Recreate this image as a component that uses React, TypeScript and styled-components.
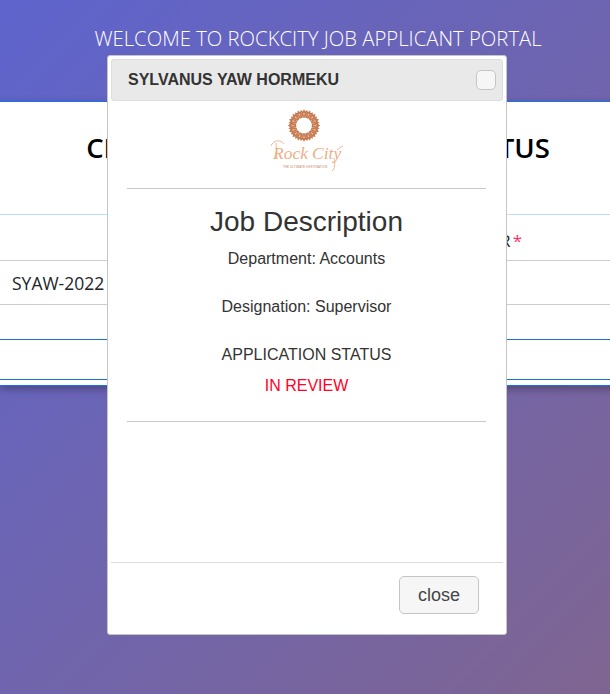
import React from "react";
import styled, { createGlobalStyle } from "styled-components";

const GlobalStyle = createGlobalStyle`
  html, body {
    margin: 0;
    padding: 0;
    height: 100%;
  }
  body {
    font-family: "Open Sans", sans-serif;
    overflow: hidden;
  }
`;

const Logo: React.FC = () => {
  const rays = Array.from({ length: 16 }, (_, i) => (i * 360) / 16);
  return (
    <svg width="74" height="66" viewBox="0 0 74 66" role="img" aria-label="Rock City">
      <g transform="translate(34 19.5)">
        {rays.map(angle => (
          <g key={angle} transform={`rotate(${angle})`}>
            <path d="M-1.4 -7.8 L1.4 -7.8 L3.4 -15.4 L1.4 -14 L0 -16.2 L-1.4 -14 L-3.4 -15.4 Z" fill="#c67b52" />
            <path d="M0 -9 L0.8 -12.4 L-0.8 -12.4 Z" fill="#ecc6ae" />
          </g>
        ))}
      </g>
      <path
        d="M1 40 C3 34 11 33 14 38 M6 37 L7 53 M67 44 C69 42 71 41 73 40"
        fill="none"
        stroke="#f0ae88"
        strokeWidth="0.9"
      />
      <path d="M64 52 C65 58 65 63 62 65" fill="none" stroke="#f0ae88" strokeWidth="0.9" />
      <text x="3" y="53" fontFamily="Liberation Serif, serif" fontStyle="italic" fontSize="17.5" fill="#f0ae88">
        Rock
      </text>
      <text x="42" y="53" fontFamily="Liberation Serif, serif" fontStyle="italic" fontSize="17.5" fill="#f0ae88">
        City
      </text>
      <text x="35" y="61.5" textAnchor="middle" fontFamily="Liberation Sans, sans-serif" fontSize="3.2" fill="#c98f70">
        THE ULTIMATE DESTINATION
      </text>
    </svg>
  );
};

const App: React.FC = () => (
  <>
    <GlobalStyle />
    <Page>
      <Banner>WELCOME TO ROCKCITY JOB APPLICANT PORTAL</Banner>
      <Card>
        <CardTitle>CHECK YOUR APPLICATION STATUS</CardTitle>
        <Table>
          <HeadRow>
            APPLICATION NUMBER<Required>*</Required>
          </HeadRow>
          <BodyRow>SYAW-2022</BodyRow>
          <SpacerRow />
          <ActionRow />
        </Table>
      </Card>

      <Dialog>
        <TitleBar>
          <DialogName>SYLVANUS YAW HORMEKU</DialogName>
          <IconButton aria-label="close" />
        </TitleBar>
        <DialogContent>
          <LogoWrap>
            <Logo />
          </LogoWrap>
          <Rule />
          <JobHeading>Job Description</JobHeading>
          <Line>Department: Accounts</Line>
          <Line>Designation: Supervisor</Line>
          <Line>APPLICATION STATUS</Line>
          <Status>IN REVIEW</Status>
          <BottomRule />
        </DialogContent>
        <ButtonPane>
          <CloseButton>close</CloseButton>
        </ButtonPane>
      </Dialog>
    </Page>
  </>
);

const Page = styled.div`
  position: relative;
  height: 694px;
  overflow: hidden;
  background: linear-gradient(135deg, #5e64cd 0%, #7f6591 100%);
`;

const Banner = styled.div`
  width: 636px;
  height: 101px;
  padding-top: 25px;
  box-sizing: border-box;
  text-align: center;
  font-size: 20.3px;
  line-height: 26px;
  font-weight: 300;
  color: #fff;
  white-space: nowrap;
`;

const Card = styled.div`
  width: 636px;
  height: 285px;
  box-sizing: border-box;
  background: #fff;
  border-top: 1px solid #1a73e8;
  border-bottom: 1px solid #1a73e8;
  box-shadow: 0 3px 8px rgba(0, 0, 0, 0.3);
`;

const CardTitle = styled.h2`
  margin: 0;
  height: 112px;
  padding-top: 28px;
  box-sizing: border-box;
  text-align: center;
  font-size: 27.5px;
  line-height: 36px;
  font-weight: 600;
  color: #000;
  white-space: nowrap;
`;

const Table = styled.div`
  display: flex;
  flex-direction: column;
`;

const HeadRow = styled.div`
  height: 46px;
  box-sizing: border-box;
  padding: 14px 114px 0 0;
  text-align: right;
  border-top: 1px solid #b9dcf8;
  font-size: 17px;
  line-height: 24px;
  color: #212529;
`;

const Required = styled.span`
  margin-left: 2px;
  color: #ff3366;
`;

const BodyRow = styled.div`
  display: flex;
  align-items: center;
  height: 44px;
  padding-left: 12px;
  border-top: 1px solid #ccc;
  box-sizing: border-box;
  font-size: 17.5px;
  color: #212529;
`;

const SpacerRow = styled.div`
  height: 35px;
  border-top: 1px solid #ccc;
  box-sizing: border-box;
`;

const ActionRow = styled.div`
  height: 41px;
  border-top: 1px solid #1a6fd0;
  border-bottom: 1px solid #1a6fd0;
  box-sizing: border-box;
`;

const Dialog = styled.div`
  position: absolute;
  left: 107px;
  top: 55px;
  width: 400px;
  height: 580px;
  box-sizing: border-box;
  padding: 3px;
  display: flex;
  flex-direction: column;
  background: #fff;
  border: 1px solid #c5c5c5;
  border-radius: 3px;
  font-family: "Liberation Sans", Arial, sans-serif;
`;

const TitleBar = styled.div`
  display: flex;
  align-items: center;
  justify-content: space-between;
  height: 42px;
  flex-shrink: 0;
  box-sizing: border-box;
  padding: 0 6px 0 16px;
  background: #e9e9e9;
  border: 1px solid #dddddd;
  border-radius: 3px;
`;

const DialogName = styled.span`
  font-size: 16px;
  font-weight: 700;
  color: #333;
`;

const IconButton = styled.button`
  width: 20px;
  height: 20px;
  padding: 0;
  background: #f6f6f6;
  border: 1px solid #c5c5c5;
  border-radius: 5px;
`;

const DialogContent = styled.div`
  flex: 1;
  padding: 5px 17px 0 16px;
  display: flex;
  flex-direction: column;
  align-items: center;
  color: #333;
`;

const LogoWrap = styled.div`
  height: 66px;
`;

const Rule = styled.hr`
  width: 100%;
  margin: 16px 0 0;
  border: 0;
  border-top: 1px solid #c8c8c8;
`;

const BottomRule = styled(Rule)`
  margin-top: 26px;
`;

const JobHeading = styled.h1`
  margin: 16px 0 0;
  font-size: 28px;
  line-height: 33px;
  font-weight: 400;
  color: #333;
`;

const Line = styled.p`
  margin: 12px 0 18px;
  font-size: 16px;
  line-height: 18px;
  &:last-of-type {
    margin-bottom: 0;
  }
`;

const Status = styled.div`
  margin-top: 13px;
  font-size: 16px;
  line-height: 18px;
  color: #ff0027;
`;

const ButtonPane = styled.div`
  display: flex;
  justify-content: flex-end;
  height: 69px;
  flex-shrink: 0;
  box-sizing: border-box;
  padding: 13px 24px 0;
  border-top: 1px solid #dddddd;
`;

const CloseButton = styled.button`
  width: 80px;
  height: 38px;
  padding: 0;
  background: #f6f6f6;
  border: 1px solid #c5c5c5;
  border-radius: 5px;
  font-family: "Liberation Sans", Arial, sans-serif;
  font-size: 18px;
  color: #454545;
`;

export default App;
